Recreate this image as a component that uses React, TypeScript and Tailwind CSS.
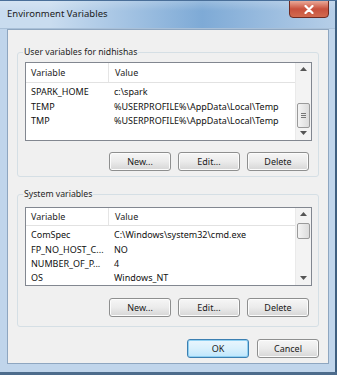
import React from "react";

const font = { fontFamily: '"Noto Sans", "Open Sans", Arial, sans-serif' };

function Btn({ label, primary }: { label: string; primary?: boolean }) {
  return (
    <div
      className={
        "w-[62px] h-[19px] rounded-[3px] border flex items-center justify-center text-[9px] text-[#1a1a1a] " +
        (primary
          ? "border-[#3c7fb1] bg-gradient-to-b from-[#eaf6fd] via-[#d9f0fc] to-[#bee6fd] shadow-[inset_0_0_0_1px_#8fd0f2]"
          : "border-[#8e8f8f] bg-gradient-to-b from-[#f6f6f6] via-[#ebebeb] to-[#d6d6d6] shadow-[inset_0_0_0_1px_#fcfcfc]")
      }
    >
      {label}
    </div>
  );
}

function Scrollbar({ thumbTop, thumbH, grip }: { thumbTop: number; thumbH: number; grip?: boolean }) {
  return (
    <div className="relative w-[16px] h-full bg-[#f3f3f3] border-l border-[#eaeaea]">
      <div className="absolute left-0 right-0 top-[4px] flex justify-center">
        <svg width="7" height="4" viewBox="0 0 7 4">
          <path d="M0 4 L3.5 0 L7 4 Z" fill="#555" />
        </svg>
      </div>
      <div
        className="absolute left-[1px] right-[1px] rounded-[2px] border border-[#9a9a9a] bg-gradient-to-r from-[#f4f4f4] to-[#dcdcdc] flex items-center justify-center"
        style={{ top: thumbTop, height: thumbH }}
      >
        {grip && (
          <div className="flex flex-col gap-[1px]">
            <div className="w-[5px] h-[1px] bg-[#777]" />
            <div className="w-[5px] h-[1px] bg-[#777]" />
            <div className="w-[5px] h-[1px] bg-[#777]" />
          </div>
        )}
      </div>
      <div className="absolute left-0 right-0 bottom-[5px] flex justify-center">
        <svg width="7" height="4" viewBox="0 0 7 4">
          <path d="M0 0 L3.5 4 L7 0 Z" fill="#555" />
        </svg>
      </div>
    </div>
  );
}

function ListView({
  rows,
  thumbTop,
  thumbH,
  grip,
}: {
  rows: [string, string][];
  thumbTop: number;
  thumbH: number;
  grip?: boolean;
}) {
  return (
    <div className="w-[287px] h-[79px] border border-[#828790] bg-white flex">
      <div className="flex-1 flex flex-col overflow-hidden">
        <div className="h-[20px] flex items-center border-b border-[#e2e2e2] text-[9px] text-[#1e1e1e]">
          <div className="w-[83px] pl-[5px] border-r border-[#e5e5e5] h-full flex items-center">Variable</div>
          <div className="pl-[6px]">Value</div>
        </div>
        <div className="pt-[2px] flex flex-col">
          {rows.map(([a, b], i) => (
            <div key={i} className="h-[14.3px] flex items-center text-[9px] text-[#111] whitespace-nowrap">
              <div className="w-[83px] pl-[5px] overflow-hidden">{a}</div>
              <div className="pl-[5px]">{b}</div>
            </div>
          ))}
        </div>
      </div>
      <Scrollbar thumbTop={thumbTop} thumbH={thumbH} grip={grip} />
    </div>
  );
}

function Group({
  label,
  children,
  className,
}: {
  label: string;
  children: React.ReactNode;
  className?: string;
}) {
  return (
    <div className={"relative mx-[9px] border border-[#d5dfe5] rounded-[3px] pl-[7px] pr-[8px] " + (className || "")}>
      <div className="absolute left-[5px] top-[-8px] px-[1px] bg-[#f0f0f0] text-[8.7px] text-[#1e1e1e] leading-[14px]">
        {label}
      </div>
      {children}
    </div>
  );
}

export default function App() {
  return (
    <div
      className="w-[337px] h-[375px] relative overflow-hidden bg-[#c0d5eb] border-t border-[#4a6f99]"
      style={font}
    >
      {/* title bar */}
      <div className="h-[28px] relative bg-gradient-to-r from-[#c9dcef] from-[15%] via-[#7eaad6] via-[60%] to-[#b7cfe8] border-b border-[#a9c0d8]">
        <div className="absolute inset-x-0 top-0 h-[10px] bg-gradient-to-b from-[#ffffff33] to-transparent" />
        <div className="absolute left-[7px] top-[6px] text-[9.5px] text-[#1a1a1a]">Environment Variables</div>
        <div className="absolute left-[289px] top-[-1px] w-[40px] h-[18px] rounded-b-[4px] border border-[#6e2a22] bg-gradient-to-b from-[#e9a898] via-[#c8503d] to-[#d26a4f] flex items-center justify-center">
          <svg width="10" height="9" viewBox="0 0 10 9">
            <path d="M1.5 1 L8.5 8 M8.5 1 L1.5 8" stroke="#fff" strokeWidth="2.2" strokeLinecap="round" />
          </svg>
        </div>
      </div>
      {/* client */}
      <div className="absolute left-[7px] top-[28px] w-[322px] h-[335px] bg-[#f0f0f0] border border-[#8ea6c0] flex flex-col">
        <Group label="User variables for nidhishas" className="mt-[22px] pt-[9px] pb-[5px]">
          <ListView
            rows={[
              ["SPARK_HOME", "c:\\spark"],
              ["TEMP", "%USERPROFILE%\\AppData\\Local\\Temp"],
              ["TMP", "%USERPROFILE%\\AppData\\Local\\Temp"],
            ]}
            thumbTop={40}
            thumbH={25}
            grip
          />
          <div className="mt-[11px] flex justify-end gap-[7px] pr-[1px]">
            <Btn label="New..." />
            <Btn label="Edit..." />
            <Btn label="Delete" />
          </div>
        </Group>
        <Group label="System variables" className="mt-[17px] pt-[12px] pb-[9px]">
          <ListView
            rows={[
              ["ComSpec", "C:\\Windows\\system32\\cmd.exe"],
              ["FP_NO_HOST_C...", "NO"],
              ["NUMBER_OF_P...", "4"],
              ["OS", "Windows_NT"],
            ]}
            thumbTop={15}
            thumbH={16}
          />
          <div className="mt-[12px] flex justify-end gap-[7px] pr-[1px]">
            <Btn label="New..." />
            <Btn label="Edit..." />
            <Btn label="Delete" />
          </div>
        </Group>
        <div className="mt-[12px] flex justify-end gap-[8px] pr-[9px]">
          <Btn label="OK" primary />
          <Btn label="Cancel" />
        </div>
      </div>
      <div className="absolute right-0 top-0 bottom-0 w-[2px] bg-[#3f5f80]" />
      <div className="absolute left-0 right-0 bottom-0 h-[3px] bg-[#4d6c8c]" />
    </div>
  );
}
